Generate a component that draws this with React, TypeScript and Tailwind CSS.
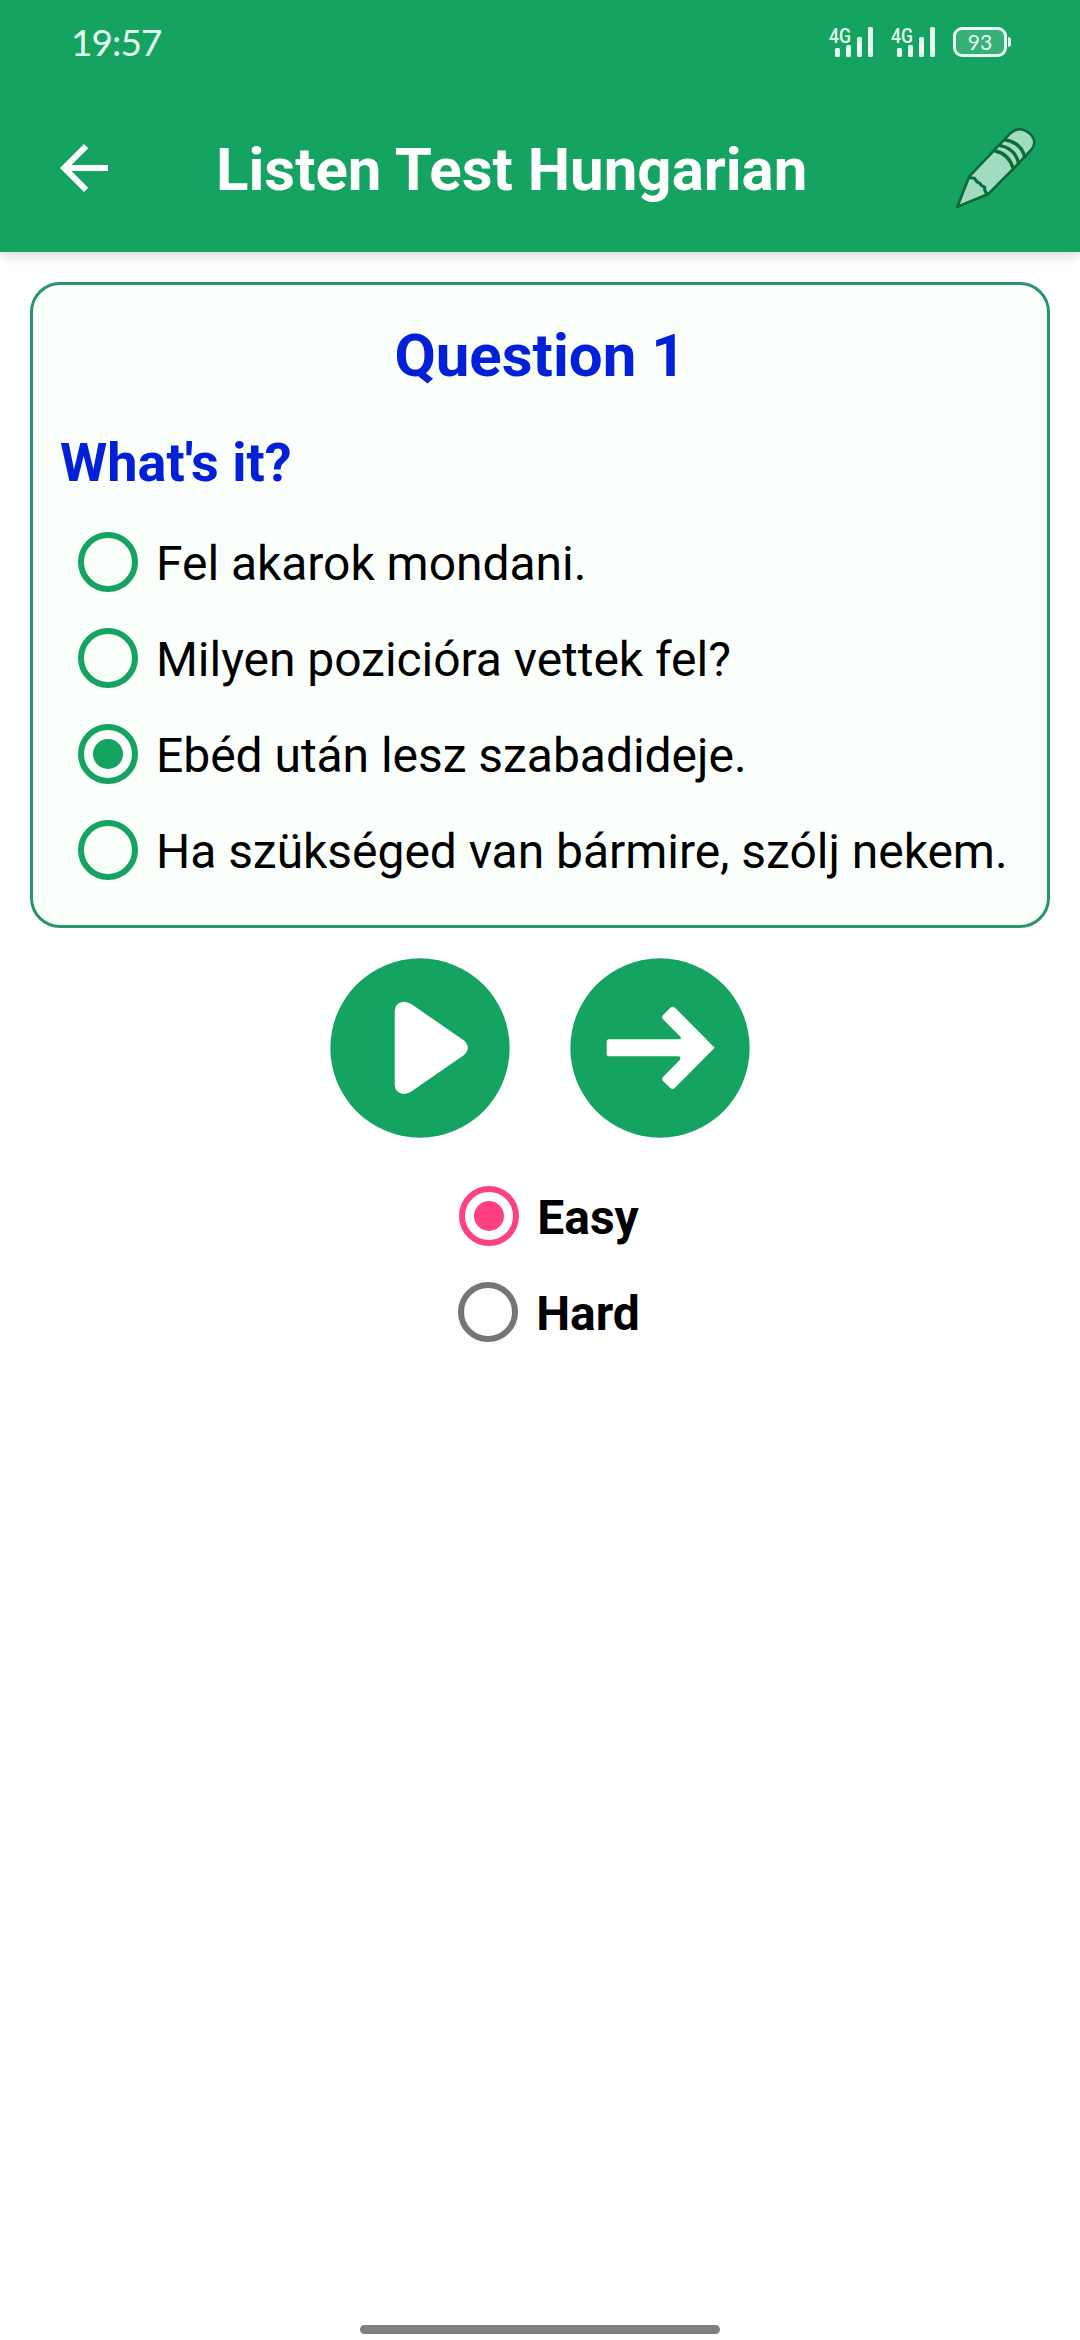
import { useState } from 'react'
import clsx from 'clsx'

type Level = 'Easy' | 'Hard';

const ANSWERS = [
  'Fel akarok mondani.',
  'Milyen pozicióra vettek fel?',
  'Ebéd után lesz szabadideje.',
  'Ha szükséged van bármire, szólj nekem.',
];

const LEVELS: Level[] = ['Easy', 'Hard'];

export default function App() {
  const [answer, setAnswer] = useState(2);
  const [level, setLevel] = useState<Level>('Easy');

  return (
    <div className="flex flex-col h-[2340px] w-[1080px] overflow-hidden bg-white font-[Roboto,sans-serif] text-black">
      <header className="shrink-0 bg-[#14a360] text-white shadow-[0_3px_12px_rgba(0,0,0,0.17)]">
        <StatusBar />
        <Toolbar />
      </header>

      <main className="flex flex-col items-center px-[30px] pt-[30px]">
        {/* Question card */}
        <section className="w-full h-[646px] rounded-[30px] border-3 border-[#2a9668] bg-[#fbfffc] px-[27px] pt-[31px]">
          <h2 className="text-center text-[60px] leading-[80px] font-bold text-[#0120d8]">Question 1</h2>
          <h3 className="mt-[31px] mb-[15px] text-[54px] leading-[72px] font-bold text-[#0120d8]">What's it?</h3>
          <div role="radiogroup">
            {ANSWERS.map((text, i) => (
              <Radio
                key={text}
                label={text}
                checked={answer === i}
                color="text-[#14a360]"
                onSelect={() => setAnswer(i)}
              />
            ))}
          </div>
        </section>

        {/* Play / next */}
        <div className="mt-[30px] flex gap-[60px]">
          <button aria-label="Play">
            <svg className="block size-[180px]" viewBox="30 54 540 540">
              <circle cx="300" cy="324" r="269" fill="#14a360" />
              <path
                d="M224 214Q226 186 252 185Q263 185 275 193L431 301Q456 323 431 346L275 454Q263 462 252 462Q226 460 224 434Z"
                fill="#fff"
              />
            </svg>
          </button>
          <button aria-label="Next">
            <svg className="block size-[180px]" viewBox="750 54 540 540">
              <circle cx="1020" cy="324" r="269" fill="#14a360" />
              <path
                d="M867 298H1077Q1085 298 1082 291L1029 238Q1024 232 1029 226L1051 203Q1058 197 1065 203L1184 323L1065 443Q1058 450 1051 444L1029 423Q1024 417 1029 411L1080 359Q1084 350 1075 349H867Q860 349 860 341V306Q860 298 867 298Z"
                fill="#fff"
              />
            </svg>
          </button>
        </div>

        {/* Difficulty */}
        <div role="radiogroup" className="mt-[30px] flex flex-col items-center">
          {LEVELS.map((name) => (
            <Radio
              key={name}
              label={name}
              bold
              checked={level === name}
              color={level === name ? 'text-[#ff4081]' : 'text-[#757575]'}
              onSelect={() => setLevel(name)}
            />
          ))}
        </div>
      </main>

      <div className="mt-auto mb-[6px] h-[9px] w-[360px] self-center rounded-full bg-[#808080]" />
    </div>
  );
}

function Radio({
  label,
  checked,
  color,
  bold,
  onSelect,
}: {
  label: string;
  checked: boolean;
  color: string;
  bold?: boolean;
  onSelect: () => void;
}) {
  return (
    <button role="radio" aria-checked={checked} onClick={onSelect} className="flex h-24 items-center">
      <span className="flex size-24 items-center justify-center">
        <span className={clsx('flex size-[60px] items-center justify-center rounded-full border-6 border-current', color)}>
          {checked && <span className="size-[30px] rounded-full bg-current" />}
        </span>
      </span>
      <span
        className={clsx(
          'pt-[3px] text-[48px] leading-[56px] whitespace-nowrap',
          bold ? 'font-bold' : 'tracking-[-0.04px]',
        )}
      >
        {label}
      </span>
    </button>
  );
}

function Toolbar() {
  return (
    <div className="flex h-[168px] items-center pr-10 pl-12">
      <button aria-label="Back">
        <svg className="block size-[72px]" viewBox="0 0 24 24" fill="currentColor">
          <path d="M20 11H7.83l5.59-5.59L12 4l-8 8 8 8 1.41-1.41L7.83 13H20v-2z" />
        </svg>
      </button>
      <h1 className="ml-24 pt-1 text-[60px] leading-[70px] font-bold whitespace-nowrap">Listen Test Hungarian</h1>
      <button aria-label="Edit" className="ml-auto">
        <PencilIcon />
      </button>
    </div>
  );
}

function PencilIcon() {
  return (
    <svg
      className="block size-[87px]"
      viewBox="99 72 261 261"
      fill="none"
      stroke="#0b6b3a"
      strokeWidth="8"
      strokeLinecap="round"
      strokeLinejoin="round"
    >
      <path
        d="M112 317L148 226L270 98Q288 80 309 86Q333 93 342 116Q346 132 334 146L278 205L205 279Z"
        fill="#a1dcc0"
      />
      <path d="M149 230L164 232Q169 244 180 247Q183 256 194 258Q192 269 201 279" strokeWidth="9" />
      <path d="M226 150Q266 158 280 203M241 134Q286 143 296 188M256 117Q303 124 314 168" strokeWidth="10" />
    </svg>
  );
}

function StatusBar() {
  return (
    <div className="flex h-[84px] items-center pr-[69px] pl-[71px] text-[#e6fff3]">
      <span className="pb-px font-[Lato,sans-serif] text-[37px] leading-[44px] tracking-[-0.9px]">19:57</span>
      <div className="ml-auto flex items-center">
        <Signal />
        <Signal />
        <Battery level={93} />
      </div>
    </div>
  );
}

function Signal() {
  return (
    <svg className="mr-[10px] block h-[42px] w-[52px]" viewBox="-4 -6 52 42" fill="currentColor">
      <text x="0" y="15.5" fontSize="20" fontWeight="500" textLength="22" lengthAdjust="spacingAndGlyphs">
        4G
      </text>
      <rect x="6" y="21" width="5" height="9" rx="1.5" />
      <rect x="17" y="18" width="5" height="12" rx="1.5" />
      <rect x="28" y="10" width="5" height="20" rx="1.5" />
      <rect x="39" y="0" width="5" height="30" rx="1.5" />
    </svg>
  );
}

function Battery({ level }: { level: number }) {
  return (
    <div className="ml-1 flex items-center">
      <div className="flex h-[30px] w-[54px] items-center justify-center rounded-[9px] border-3 border-current bg-[#37b077] pb-px font-[Lato,sans-serif] text-[21px] leading-none">
        {level}
      </div>
      <div className="ml-px h-[10px] w-[3px] rounded-r-sm bg-current" />
    </div>
  );
}
